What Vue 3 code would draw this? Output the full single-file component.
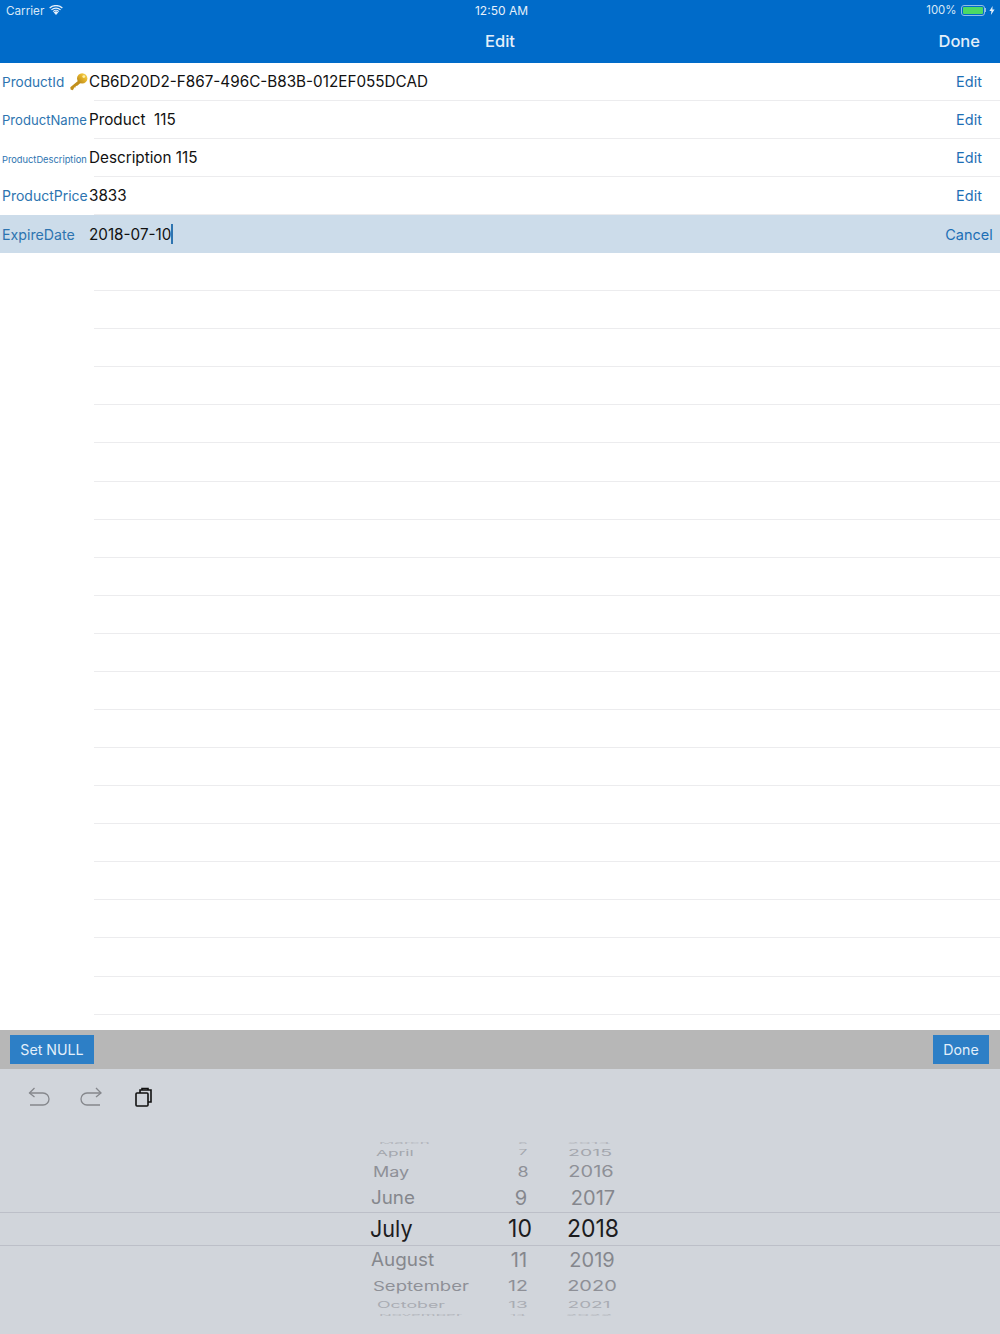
<script setup>
const fields = [
  { label: 'ProductId', value: 'CB6D20D2-F867-496C-B83B-012EF055DCAD', action: 'Edit', key: true, fit: 'idlabel' },
  { label: 'ProductName', value: 'Product  115', action: 'Edit', fit: 'narrow' },
  { label: 'ProductDescription', value: 'Description 115', action: 'Edit', fit: 'tiny' },
  { label: 'ProductPrice', value: '3833', action: 'Edit' },
  { label: 'ExpireDate', value: '2018-07-10', action: 'Cancel', active: true, fit: 'wide' },
]
const blanks = Array.from({ length: 20 }, (_, i) => i)
const wheel = [
  { m: 'March', d: '6', y: '2014', h: 6, mf: 17, df: 15, yf: 19, sy: 0.14, c: '#b4b7bd', mx: 9, dx: 3, yx: -4 },
  { m: 'April', d: '7', y: '2015', h: 13, mf: 17.3, df: 15.5, yf: 19.5, sy: 0.47, c: '#a3a6ad', mx: 6, dx: 3, yx: -3 },
  { m: 'May', d: '8', y: '2016', h: 25, mf: 18, df: 18, yf: 20, sy: 0.78, c: '#8e9097', mx: 3, dx: 3, yx: -2 },
  { m: 'June', d: '9', y: '2017', h: 28, mf: 18.8, df: 20, yf: 20, sy: 0.97, c: '#85878d', mx: 1, dx: 1, yx: 0 },
  { m: 'July', d: '10', y: '2018', h: 34, mf: 21.6, df: 23, yf: 23, sy: 1.04, c: '#1c1c1e', mx: 0, dx: 0, yx: 0, now: true },
  { m: 'August', d: '11', y: '2019', h: 28, mf: 18.9, df: 20, yf: 20, sy: 0.97, c: '#85878d', mx: 1, dx: -1, yx: -1 },
  { m: 'September', d: '12', y: '2020', h: 23, mf: 18.5, df: 19.5, yf: 20, sy: 0.72, c: '#8e9097', mx: 3, dx: -2, yx: -1 },
  { m: 'October', d: '13', y: '2021', h: 15, mf: 17.8, df: 19, yf: 19, sy: 0.47, c: '#a9acb3', mx: 7, dx: -2, yx: -4 },
  { m: 'November', d: '14', y: '2022', h: 5, mf: 17, df: 15, yf: 19, sy: 0.14, c: '#b4b7bd', mx: 9, dx: -2, yx: -4 },
]
function cell(r, size, x) {
  return { fontSize: size + 'px', color: r.c, transform: `translateX(${x}px) scaleY(${r.sy})` }
}
</script>

<template>
  <div class="screen">
    <header class="nav">
      <div class="status">
        <div class="status-left">
          <span>Carrier</span>
          <svg class="wifi" width="14" height="10" viewBox="0 0 14 10">
            <path d="M7 10 4.6 7.3a3.6 3.6 0 0 1 4.8 0Z" fill="#e4effa" />
            <path d="M3.7 6.3a5 5 0 0 1 6.6 0l-.6.7a4 4 0 0 0-5.4 0Z" fill="#e4effa" />
            <path d="M2 4.4a7.5 7.5 0 0 1 10 0l-.8.9a6.3 6.3 0 0 0-8.4 0Z" fill="#e4effa" />
            <path d="M.2 2.5a10.2 10.2 0 0 1 13.6 0l-.9 1a8.9 8.9 0 0 0-11.8 0Z" fill="#e4effa" />
          </svg>
        </div>
        <span class="clock">12:50 AM</span>
        <div class="status-right">
          <span class="pct">100%</span>
          <span class="battery"><i></i></span>
          <span class="nub"></span>
          <svg width="6" height="9" viewBox="0 0 6 9" class="bolt"><path d="M3.6 0 .4 5h2L1.9 9 5.6 3.6H3.4Z" fill="#e4effa" /></svg>
        </div>
      </div>
      <div class="titlebar">
        <span class="spacer"></span>
        <span class="title">Edit</span>
        <span class="nav-done">Done</span>
      </div>
    </header>

    <main class="list">
      <div v-for="f in fields" :key="f.label" class="row" :class="{ active: f.active }">
        <span class="label" :class="f.fit">
          {{ f.label }}
          <svg v-if="f.key" class="key" width="20" height="20" viewBox="0 0 20 20">
            <defs>
              <linearGradient id="gold" x1="0" y1="1" x2="1" y2="0">
                <stop offset="0" stop-color="#b07f16" />
                <stop offset="0.6" stop-color="#e8b62c" />
                <stop offset="1" stop-color="#f7da62" />
              </linearGradient>
            </defs>
            <path d="M10.4 7.8 1.3 15.2l.3 2.4 1.9.6 1.2-1.2.3-1.5 1.5-.1.3-1.5 1.5-.2 4.3-3.7Z" fill="#c2901c" />
            <circle cx="13.2" cy="6.4" r="5.2" fill="url(#gold)" />
            <circle cx="14.8" cy="4.6" r="1.4" fill="#fff0a8" />
          </svg>
        </span>
        <span class="value">{{ f.value }}<i v-if="f.active" class="caret"></i></span>
        <span class="action">{{ f.action }}</span>
      </div>
      <div v-for="n in blanks" :key="n" class="row blank"></div>
    </main>

    <div class="accessory">
      <button class="btn set-null">Set NULL</button>
      <button class="btn done">Done</button>
    </div>

    <section class="keyboard">
      <div class="shortcuts">
        <svg width="24" height="22" viewBox="0 0 24 22" fill="none" stroke="#85878c" stroke-width="1.3">
          <path d="M2.5 7H16a5 5 0 0 1 0 12H3" />
          <path d="M7.5 2 2.5 7l5 4" />
        </svg>
        <svg width="24" height="22" viewBox="0 0 24 22" fill="none" stroke="#85878c" stroke-width="1.3">
          <path d="M21 7H7a5 5 0 0 0 0 12h13" />
          <path d="m16 2 5 5-5 4" />
        </svg>
        <svg width="22" height="22" viewBox="0 0 22 22" fill="none" stroke="#111" stroke-width="1.6">
          <rect x="3" y="7" width="12" height="13" rx="1" />
          <path d="M7 7V4h11v12h-3" />
          <path d="M9 4V2.5h6V4" />
        </svg>
      </div>
      <div class="wheel">
        <div v-for="r in wheel" :key="r.m" class="wheel-row" :class="{ now: r.now }" :style="{ height: r.h + 'px' }">
          <span class="w-cell month" :style="cell(r, r.mf, r.mx)">{{ r.m }}</span>
          <span class="w-cell num" :style="cell(r, r.df, r.dx)">{{ r.d }}</span>
          <span class="w-cell num" :style="cell(r, r.yf, r.yx)">{{ r.y }}</span>
        </div>
      </div>
    </section>
  </div>
</template>

<style>
html, body { margin: 0; background: #fff; }
</style>

<style scoped>
.screen {
  width: 1000px;
  height: 1334px;
  display: flex;
  flex-direction: column;
  overflow: hidden;
  font-family: Inter, "Liberation Sans", sans-serif;
  background: #fff;
}
.nav { height: 62.7px; background: #006bc9; color: #fff; flex: none; }
.status {
  height: 20px;
  box-sizing: border-box;
  padding: 1px 5px 0 6px;
  display: grid;
  grid-template-columns: 1fr auto 1fr;
  align-items: center;
  font-size: 11.7px;
  color: #d8e8f7;
}
.status-left { display: flex; align-items: center; gap: 5px; }
.wifi { margin-top: -2px; }
.clock { margin-left: 2px; color: #e6f0fa; font-size: 12px; }
.status-right { display: flex; align-items: center; justify-content: flex-end; margin-top: -1px; }
.pct { font-size: 11.4px; margin-right: 1px; }
.battery {
  width: 24px;
  height: 11px;
  margin-left: 3px;
  box-sizing: border-box;
  border: 1px solid #8fbce6;
  border-radius: 3px;
  padding: 1px;
  display: flex;
}
.battery i { flex: 1; background: #4cd964; border-radius: 1px; }
.nub { width: 1.5px; height: 4px; background: #8fbce6; margin-right: 3px; }
.titlebar {
  height: 41px;
  display: grid;
  grid-template-columns: 1fr auto 1fr;
  align-items: center;
  padding: 0 20px;
  font-size: 16.5px;
  font-weight: 500;
  color: #e3effa;
}
.nav-done { justify-self: end; }
.list { flex: 1; min-height: 0; overflow: hidden; }
.row {
  height: 38.08px;
  box-sizing: border-box;
  display: flex;
  align-items: center;
  padding-left: 2px;
  position: relative;
}
.row::after {
  content: "";
  position: absolute;
  left: 94px;
  right: 0;
  bottom: 0;
  height: 1px;
  background: #ececee;
}
.row.active { background: #ccdcea; }
.row.active::after { display: none; }
.label {
  width: 87px;
  flex: none;
  font-size: 14px;
  color: #2d74b0;
  white-space: nowrap;
  display: flex;
  align-items: center;
  position: relative;
}
.label.idlabel { font-size: 13.6px; }
.label.narrow { font-size: 13.1px; }
.label.wide { font-size: 14.2px; }
.label.tiny { font-size: 9.3px; padding-top: 3px; }
.key { position: absolute; left: 67px; top: -2px; }
.value {
  flex: 1;
  font-size: 15.25px;
  color: #111;
  white-space: pre;
  display: flex;
  align-items: center;
}
.caret { width: 1.5px; height: 20px; background: #2d74b0; margin-left: 0; }
.action {
  width: 62px;
  flex: none;
  text-align: center;
  font-size: 14.5px;
  color: #1d6fb5;
}
.accessory {
  height: 39px;
  flex: none;
  box-sizing: border-box;
  background: #b7b7b7;
  display: flex;
  justify-content: space-between;
  align-items: flex-start;
  padding: 5px 11px 0 10px;
}
.btn {
  height: 29px;
  padding: 0;
  border: none;
  background: #2d7fc6;
  color: #e3effa;
  font: 400 14.2px Inter, "Liberation Sans", sans-serif;
}
.set-null { width: 84px; }
.done { width: 56px; }
.keyboard { height: 265px; flex: none; background: #d1d5db; }
.shortcuts {
  height: 56px;
  box-sizing: border-box;
  display: flex;
  align-items: center;
  gap: 29px;
  padding-left: 27px;
  margin-bottom: 15px;
}
.wheel-row {
  box-sizing: border-box;
  display: grid;
  grid-template-columns: 120px 60px 86px;
  padding-left: 370px;
  align-items: center;
}
.wheel-row.now {
  border-top: 1px solid #bcbfc8;
  border-bottom: 1px solid #bcbfc8;
}
.w-cell { line-height: 0; white-space: nowrap; }
.num { text-align: center; }
.month { transform-origin: left center; }
</style>
